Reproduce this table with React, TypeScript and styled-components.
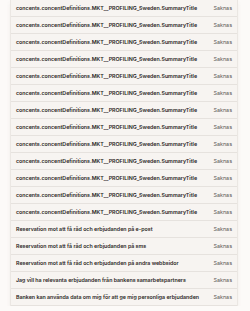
import React from "react";
import styled, { createGlobalStyle } from "styled-components";

const Global = createGlobalStyle`
  html, body { margin: 0; padding: 0; background: #fcfaf8; }
  body { font-family: Inter, "Noto Sans", sans-serif; }
`;

const Page = styled.div`
  padding: 0 12px 0 10px;
`;

const Table = styled.div`
  width: 228px;
  background: #f7f4f1;
  border-left: 1px solid #ebe7e3;
  border-right: 1px solid #ebe7e3;
  box-sizing: border-box;
  box-shadow: 0 3px 4px rgba(120, 100, 80, 0.08);
`;

const Row = styled.div`
  display: flex;
  align-items: center;
  justify-content: space-between;
  height: 16px;
  border-bottom: 1px solid #e6e2de;
  padding: 0 5px 0 5px;
`;

const Title = styled.span`
  font-size: 5.3px;
  font-weight: 600;
  color: #2a2624;
  white-space: nowrap;
`;

const Status = styled.span`
  font-size: 5.4px;
  font-weight: 400;
  color: #5d5856;
`;

const rows = [
  ...Array(13).fill("concents.concentDefinitions.MKT__PROFILING_Sweden.SummaryTitle"),
  "Reservation mot att få råd och erbjudanden på e-post",
  "Reservation mot att få råd och erbjudanden på sms",
  "Reservation mot att få råd och erbjudanden på andra webbsidor",
  "Jag vill ha relevanta erbjudanden från bankens samarbetspartners",
  "Banken kan använda data om mig för att ge mig personliga erbjudanden",
];

export default function App() {
  return (
    <>
      <Global />
      <Page>
        <Table>
          {rows.map((r, i) => (
            <Row key={i}>
              <Title>{r}</Title>
              <Status>Saknas</Status>
            </Row>
          ))}
        </Table>
      </Page>
    </>
  );
}
